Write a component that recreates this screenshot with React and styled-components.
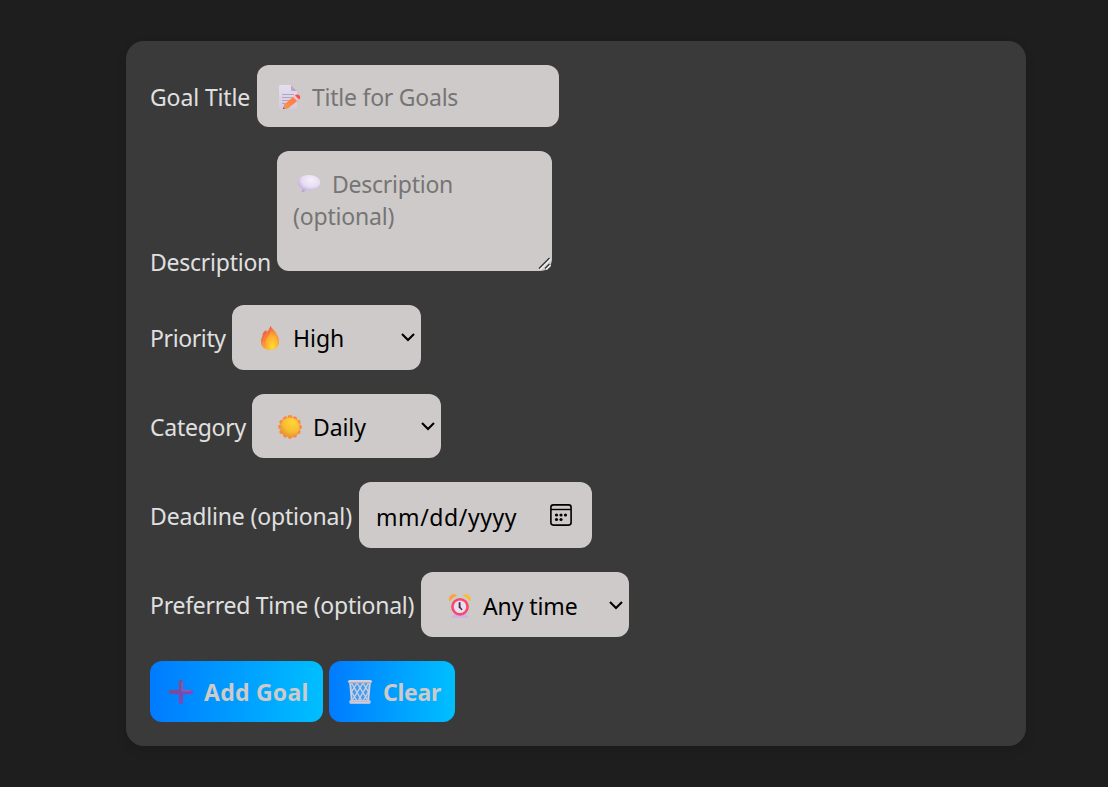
import React from "react";
import styled, { createGlobalStyle } from "styled-components";

const GlobalStyle = createGlobalStyle`
  * { box-sizing: border-box; }
  body {
    margin: 0;
    min-height: 787px;
    background: #1e1e1e;
    font-family: "Noto Sans", "Open Sans", sans-serif;
    font-size: 23px;
    line-height: 32px;
    color: #e0e0e0;
  }
`;

const Page = styled.main`
  padding: 41px 82px 41px 126px;
`;

const Card = styled.form`
  width: 900px;
  height: 705px;
  padding: 24px;
  border-radius: 18px;
  background: #3a3a3a;
  box-shadow: 0 4px 12px rgba(0, 0, 0, 0.1);
`;

const Row = styled.div`
  display: flex;
  align-items: ${(p) => p.$align || "center"};
  height: ${(p) => p.$h}px;
  margin-bottom: ${(p) => p.$gap ?? 24}px;
`;

const Text = styled.span`
  display: block;
  flex: none;
  white-space: nowrap;
  letter-spacing: ${(p) => p.$track || 0}px;
`;

const Label = styled(Text)`
  width: ${(p) => p.$w}px;
  padding-top: ${(p) => p.$drop ?? 1}px;
`;

const Field = styled.div`
  display: flex;
  align-items: center;
  flex: none;
  width: ${(p) => p.$w}px;
  height: ${(p) => p.$h}px;
  padding: ${(p) => p.$pad || "1px 6px 0 26px"};
  border-radius: 12px;
  background: #cecac9;
  color: ${(p) => (p.$muted ? "#757575" : "#000")};
`;

const TextArea = styled(Field)`
  position: relative;
  align-items: flex-start;
  flex-direction: column;
  align-self: flex-start;
`;

const Line = styled.div`
  display: flex;
  align-items: center;
  height: 32px;
  padding-left: ${(p) => p.$indent || 0}px;
`;

const Grip = styled.svg`
  position: absolute;
  right: 1px;
  bottom: 1px;
`;

const Icon = styled.svg`
  display: block;
  flex: none;
  width: 24px;
  height: 24px;
  margin-right: ${(p) => p.$gap ?? 11}px;
`;

const Glyph = styled.svg`
  flex: none;
  margin-left: auto;
  margin-top: ${(p) => p.$top ?? -2}px;
`;

const Button = styled.button`
  display: flex;
  align-items: center;
  width: ${(p) => p.$w}px;
  height: 61px;
  margin: 0 6px 0 0;
  padding: 1px 0 0 19px;
  border: 0;
  border-radius: 12px;
  background: linear-gradient(90deg, #007bff, #00bfff);
  color: #cecac9;
  font: bold 23px/32px "Noto Sans", "Open Sans", sans-serif;
`;

const MemoIcon = () => (
  <Icon viewBox="0 0 24 24" $gap={10}>
    <defs>
      <linearGradient id="paper" x1="0" y1="0" x2="0" y2="1"><stop stopColor="#e6deef" /><stop offset="1" stopColor="#d5c9df" /></linearGradient>
      <linearGradient id="pencil" x1="1" y1="0" x2="0" y2="1"><stop stopColor="#ff7048" /><stop offset="1" stopColor="#ff9a3c" /></linearGradient>
    </defs>
    <path d="M2 0h11l6 6v18H2a1 1 0 0 1-1-1V1a1 1 0 0 1 1-1z" fill="url(#paper)" />
    <path d="M13 0l6 6h-5a1 1 0 0 1-1-1z" fill="#b9a9c9" />
    <path d="M4 9.5h12M4 12.5h10M4 15.5h8M4 18.5h5" stroke="#b2a5bd" strokeWidth="1" />
    <path d="M6.5 19.2L16.500 10.700l4 4.300-10.300 8.300L5 24z" fill="url(#pencil)" />
    <path d="M5 24l1.500-4.500 3.700 3.700z" fill="#e89458" />
    <path d="M5 24l.6-1.800 1.200 1.300z" fill="#65465b" />
    <path d="M15 12l1.900-1.700 3.900 4.200-1.800 1.600z" fill="#e7c9d4" />
    <path d="M16.900 10.300c1.500-1.300 3.300-1 4.500.1s1.100 2.800-.4 4.100z" fill="#fb4d48" />
  </Icon>
);

const BubbleIcon = () => (
  <Icon viewBox="0 0 24 24">
    <defs>
      <radialGradient id="bubble" cx=".6" cy=".3" r=".75"><stop stopColor="#f5f0fa" /><stop offset=".55" stopColor="#e7dcf2" /><stop offset="1" stopColor="#b69bd8" /></radialGradient>
    </defs>
    <path d="M12 3c6.500 0 11.300 3.300 11.300 7.600s-4.800 7.700-11.300 7.700c-1.100 0-2.100-.1-3-.3-1.100 1.200-2.300 1.900-3.800 2.100-.5 0-.7-.3-.5-.8.500-1 .6-1.900.4-2.800C2.400 15.100.7 13 .7 10.600.700 6.300 5.500 3 12 3z" fill="url(#bubble)" />
  </Icon>
);

const FireIcon = () => (
  <Icon viewBox="0 0 24 24">
    <defs>
      <radialGradient id="fire" cx=".6" cy=".9" r=".9"><stop stopColor="#ffd33d" /><stop offset=".4" stopColor="#fdae35" /><stop offset=".75" stopColor="#f67340" /><stop offset="1" stopColor="#ee4b3c" /></radialGradient>
      <radialGradient id="flame" cx=".6" cy=".85" r=".85"><stop stopColor="#ffdc35" /><stop offset=".5" stopColor="#ffae31" /><stop offset="1" stopColor="#f45b3c" /></radialGradient>
    </defs>
    <path d="M12.300 0c1.500 3 4.500 4.500 6.200 8 1.800 2.500 2.700 5.200 2.500 8.500C20.700 21 17.500 24 12 24S3 20.500 3 16.300c0-2.400.3-4.300 1.400-6.300-.1-3 1.500-4.600 4.100-6-.2.900 0 1.500.4 2C10.600 4.300 11.800 2.500 12.300 0z" fill="url(#fire)" />
    <path d="M12.300 0c1.500 3 4.500 4.500 6.200 8 3.700 7.500 1 16-6.200 16-5 0-7-3-6.300-6.500C6.500 13.500 14 9 12.300 0z" fill="url(#flame)" />
    <path d="M7.500 5.500c.7 3.500-3.500 5.400-3.300 9.600M11.200 6.500C10 10.700 6.200 12.300 5.800 16" fill="none" stroke="#dc624c" strokeWidth=".8" opacity=".7" />
  </Icon>
);

const SunIcon = () => (
  <Icon viewBox="0 0 24 24">
    <defs><radialGradient id="sun" cx=".65" cy=".25" r=".9"><stop stopColor="#ffd638" /><stop offset=".55" stopColor="#f8bd32" /><stop offset="1" stopColor="#d88a2b" /></radialGradient></defs>
    <g fill="#fb8a3d">
      {[0, 30, 60, 90, 120, 150, 180, 210, 240, 270, 300, 330].map((a) => (
        <circle key={a} cx="12" cy="2.500" r="2.400" transform={`rotate(${a} 12 12)`} />
      ))}
    </g>
    <circle cx="12" cy="12" r="9.500" fill="url(#sun)" />
  </Icon>
);

const ClockIcon = () => (
  <Icon viewBox="0 0 24 24">
    <path d="M3.500 24c.5-3 2.500-4 4-4h9c2 0 3.500 1.500 4 4z" fill="#cdb4e4" />
    <path d="M1 6.500C.7 2.800 2.800.3 5.700.3c1.600 0 2.700.6 3.500 1.500C6 2.900 4 4.500 2.400 7z" fill="#f7a53c" />
    <path d="M22.800 6.500C23.100 2.800 21 .3 18 .3c-1.600 0-2.700.6-3.500 1.500 3.200 1.100 5.200 2.700 6.800 5.200z" fill="#f8bd3c" />
    <circle cx="12" cy="12.800" r="7.600" fill="#e9dff1" stroke="#f9486a" strokeWidth="2.600" />
    <path d="M11.600 9v4.200" stroke="#493347" strokeWidth="1.900" strokeLinecap="round" />
    <path d="M11.800 13.200l1.900 2.300" stroke="#493347" strokeWidth="1.400" strokeLinecap="round" />
  </Icon>
);

const PlusIcon = () => (
  <Icon viewBox="0 0 24 24">
    <defs><linearGradient id="plus" x1="0" y1="0" x2="1" y2="1"><stop stopColor="#725481" /><stop offset=".55" stopColor="#784aab" /><stop offset="1" stopColor="#8846cf" /></linearGradient></defs>
    <path d="M11.500 0h1a1.700 1.700 0 0 1 1.700 1.700v8.100h8.100a1.700 1.700 0 0 1 1.700 1.700v1a1.700 1.700 0 0 1-1.700 1.700h-8.100v8.100a1.700 1.700 0 0 1-1.700 1.700h-1a1.700 1.700 0 0 1-1.700-1.700v-8.100H1.700A1.700 1.700 0 0 1 0 12.500v-1a1.700 1.700 0 0 1 1.700-1.700h8.100V1.700A1.700 1.700 0 0 1 11.500 0z" fill="url(#plus)" />
    <path d="M13.200 1.500v9.300h9" fill="none" stroke="#a06fc0" strokeWidth=".8" />
  </Icon>
);

const TrashIcon = () => (
  <Icon viewBox="0 0 24 24">
    <path d="M2 3h20l-1.800 18H3.800z" fill="#b9c3df" opacity=".35" />
    <g fill="none" stroke="#d2ced9">
      <path d="M2.200 3l1.600 18M21.800 3l-1.600 18" strokeWidth="1.900" />
      <path d="M3 11l6 10M3.500 3l10.500 18M9 3l10.500 17M15 3l5.500 9M21 11l-6 10M20.500 3L10 21M15 3L4.500 20M9 3l-5.500 9" strokeWidth="1.400" />
    </g>
    <rect x="0" y="0" width="24" height="3.200" rx="1.600" fill="#d5d0d8" />
    <path d="M1.500 2.700h21" stroke="#988fa5" strokeWidth=".7" />
    <rect x="1.500" y="20" width="21" height="3.700" rx="1.300" fill="#d3cedb" />
    <path d="M2 21.200h20" stroke="#aaa2b8" strokeWidth=".6" />
  </Icon>
);

const Arrow = () => (
  <Glyph width="14" height="10" viewBox="0 0 14 10">
    <path d="M1 2l6 6 6-6" fill="none" stroke="#000" strokeWidth="2.100" />
  </Glyph>
);

const CalendarIcon = () => (
  <Glyph width="22" height="22" viewBox="0 0 22 22" $top={-3}>
    <rect x=".9" y=".9" width="20.200" height="20.200" rx="2.500" fill="none" stroke="#000" strokeWidth="1.600" />
    <path d="M1 5.500h20" stroke="#000" strokeWidth="1.400" />
    {[[6.5, 11], [11, 11], [15.5, 11], [6.5, 15.5], [11, 15.5]].map(([x, y]) => (
      <circle key={`${x}-${y}`} cx={x} cy={y} r="1.600" fill="#000" />
    ))}
  </Glyph>
);

const ResizeGrip = () => (
  <Grip width="13" height="13" viewBox="0 0 13 13">
    <path d="M2 12.500L12.500 2M8 12.500L12.500 8" stroke="#eee" strokeWidth="2" />
    <path d="M1 11.500L11.500 1M7 11.500L11.500 7" stroke="#333" strokeWidth="1.300" />
  </Grip>
);

export default function App() {
  return (
    <>
      <GlobalStyle />
      <Page>
        <Card>
          <Row $h={62}>
            <Label $w={107} $drop={2} $track={-0.12}>Goal Title</Label>
            <Field $w={302} $h={62} $muted $pad="2px 20px 0 21px">
              <MemoIcon />
              <Text $track={-0.24}>Title for Goals</Text>
            </Field>
          </Row>
          <Row $h={127} $align="flex-end" $gap={27}>
            <Label $w={127} $drop={0} $track={-0.25}>Description</Label>
            <TextArea $w={275} $h={120} $muted $pad="17px 16px">
              <Line $indent={4}><BubbleIcon /><Text $track={-0.25}>Description</Text></Line>
              <Line><Text $track={-0.18}>(optional)</Text></Line>
              <ResizeGrip />
            </TextArea>
          </Row>
          <Row $h={65}>
            <Label $w={82} $track={-0.38}>Priority</Label>
            <Field $w={189} $h={65}>
              <FireIcon /><Text>High</Text><Arrow />
            </Field>
          </Row>
          <Row $h={64}>
            <Label $w={102} $track={-0.25}>Category</Label>
            <Field $w={189} $h={64}>
              <SunIcon /><Text $track={-0.1}>Daily</Text><Arrow />
            </Field>
          </Row>
          <Row $h={66}>
            <Label $w={209} $track={-0.16}>Deadline (optional)</Label>
            <Field $w={233} $h={66} $pad="3px 20px 0 17px">
              <Text $track={0.58}>mm/dd/yyyy</Text><CalendarIcon />
            </Field>
          </Row>
          <Row $h={65}>
            <Label $w={271} $track={-0.26}>Preferred Time (optional)</Label>
            <Field $w={208} $h={65} $pad="2px 6px 0 27px">
              <ClockIcon /><Text $track={-0.1}>Any time</Text><Arrow />
            </Field>
          </Row>
          <Row $h={61} $gap={0}>
            <Button type="button" $w={173}><PlusIcon /><Text $track={0.25}>Add Goal</Text></Button>
            <Button type="button" $w={126}><TrashIcon /><Text $track={-0.3}>Clear</Text></Button>
          </Row>
        </Card>
      </Page>
    </>
  );
}
